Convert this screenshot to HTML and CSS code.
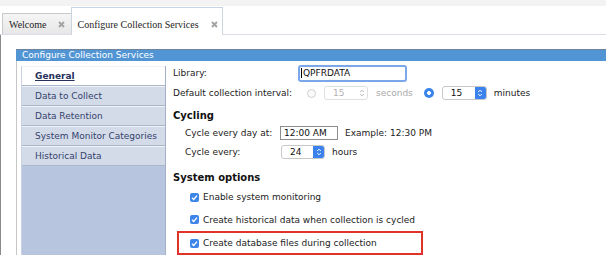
FILE: index.html
```html
<!DOCTYPE html>
<html>
<head>
<meta charset="utf-8">
<link rel="stylesheet" href="styles.css">
</head>
<body>
<div class="tabbar">
  <div class="tab">Welcome<svg class="close" width="7" height="7" viewBox="0 0 7 7"><path d="M1 1L6 6M6 1L1 6"/></svg></div>
  <div class="tab active">Configure Collection Services<svg class="close" width="7" height="7" viewBox="0 0 7 7"><path d="M1 1L6 6M6 1L1 6"/></svg></div>
</div>
<div class="main">
  <div class="panel-head">Configure Collection Services</div>
  <div class="panel-body">
    <nav class="nav">
      <div class="nav-item sel">General</div>
      <div class="nav-item">Data to Collect</div>
      <div class="nav-item">Data Retention</div>
      <div class="nav-item">System Monitor Categories</div>
      <div class="nav-item">Historical Data</div>
    </nav>
    <div class="form">
      <div class="row r-lib">
        <span class="lbl">Library:</span>
        <span class="text focus"><span class="caret"></span>QPFRDATA</span>
      </div>
      <div class="row r-int">
        <span class="lbl">Default collection interval:</span>
        <span class="radio dis"></span>
        <span class="spin dis"><span class="val">15</span><span class="btn"><svg width="6" height="10" viewBox="0 0 6 10"><path d="M1.2 4L3 2.2L4.8 4M1.2 6L3 7.8L4.8 6"/></svg></span></span>
        <span class="unit dis-txt">seconds</span>
        <span class="radio on"></span>
        <span class="spin"><span class="val">15</span><span class="btn"><svg width="6" height="10" viewBox="0 0 6 10"><path d="M1.2 4L3 2.2L4.8 4M1.2 6L3 7.8L4.8 6"/></svg></span></span>
        <span class="unit">minutes</span>
      </div>
      <div class="heading h-cyc">Cycling</div>
      <div class="row r-day ind">
        <span class="lbl2">Cycle every day at:</span>
        <span class="text plain">12:00 AM</span>
        <span class="unit">Example: 12:30 PM</span>
      </div>
      <div class="row r-every ind">
        <span class="lbl2">Cycle every:</span>
        <span class="spin"><span class="val">24</span><span class="btn"><svg width="6" height="10" viewBox="0 0 6 10"><path d="M1.2 4L3 2.2L4.8 4M1.2 6L3 7.8L4.8 6"/></svg></span></span>
        <span class="unit">hours</span>
      </div>
      <div class="heading h-sys">System options</div>
      <div class="row cbrow c1"><span class="cb"><svg width="9" height="9" viewBox="0 0 9 9"><path d="M2 4.7L3.7 6.4L7 2.6"/></svg></span>Enable system monitoring</div>
      <div class="row cbrow c2"><span class="cb"><svg width="9" height="9" viewBox="0 0 9 9"><path d="M2 4.7L3.7 6.4L7 2.6"/></svg></span>Create historical data when collection is cycled</div>
      <div class="row cbrow c3"><span class="cb"><svg width="9" height="9" viewBox="0 0 9 9"><path d="M2 4.7L3.7 6.4L7 2.6"/></svg></span>Create database files during collection</div>
    </div>
  </div>
</div>
</body>
</html>
```
FILE: styles.css
```css
* { box-sizing: border-box; }
body {
  margin: 0;
  width: 606px;
  height: 255px;
  overflow: hidden;
  background: #fff;
  font-family: "DejaVu Sans", Verdana, sans-serif;
  font-size: 9px;
  color: #222;
}
.tabbar {
  display: flex;
  align-items: flex-end;
  height: 35px;
  padding-left: 2px;
  border-bottom: 1px solid #dcdce6;
  background: linear-gradient(#f3f3f3 0 6px, #fff 6px);
}
.tab {
  display: flex;
  align-items: center;
  height: 21px;
  padding: 1px 6px 0 6px;
  border: 1px solid #c9c9c9;
  border-bottom: none;
  background: linear-gradient(#f5f5f5, #e7e7e7);
  font-family: "Liberation Serif", "Times New Roman", serif;
  font-size: 10px;
  color: #1e1e1e;
}
.tab .close { margin-left: 11px; }
.close path { stroke: #a3a3a3; stroke-width: 1.9; fill: none; }
.tab.active {
  height: 28px;
  margin-bottom: -1px;
  margin-left: -1px;
  padding: 5px 4px 0 6px;
  background: #fff;
  border-color: #cfd5de;
  border-top-color: #c6d4e8;
}
.tab.active .close { margin-left: 12px; }
.main {
  height: 220px;
  border-left: 1px solid #8a8a8a;
  padding: 14px 0 0 15px;
}
.panel-head {
  height: 12px;
  border-top: 1px solid #6d849c;
  background: #5195d5;
  color: #fff;
  padding-left: 6px;
  line-height: 11px;
}
.panel-body {
  display: flex;
  height: 200px;
  border-left: 1px solid #c6c6c6;
}
.nav {
  width: 145px;
  margin: 5px 0 0 4px;
  background: #b7c6de;
  border-right: 1px solid #a3b0c5;
  border-left: 1px solid #c9d3e3;
}
.nav-item {
  height: 20px;
  line-height: 18px;
  padding-left: 13px;
  background: #d3dbe9;
  border-top: 1px solid #f0f3f8;
  border-bottom: 1px solid #aab6ca;
  color: #33416b;
}
.nav-item.sel {
  background: #fff;
  font-weight: bold;
  text-decoration: underline;
  color: #27315c;
}
.form { flex: 1; padding-left: 7px; }
.row { display: flex; align-items: center; }
.r-lib { height: 20px; margin-top: 2px; }
.r-int { height: 20px; }
.lbl { width: 125px; }
.ind { padding-left: 12px; }
.lbl2 { width: 95px; }
.text {
  display: flex;
  align-items: center;
  color: #111;
}
.text.focus {
  width: 109px;
  height: 17px;
  border: 2px solid #7aa7ea;
  border-radius: 3px;
  padding-left: 1px;
}
.caret { width: 1px; height: 10px; background: #000; margin-right: 1px; }
.text.plain {
  width: 58px;
  height: 14px;
  border: 1px solid #8d8d8d;
  padding-left: 3px;
}
.radio {
  width: 9px;
  height: 9px;
  border-radius: 50%;
}
.radio.dis {
  margin-left: 9px;
  border: 1px solid #cfcfcf;
  background: #fafafa;
}
.radio.on {
  width: 10px;
  height: 10px;
  margin-left: 11px;
  background: radial-gradient(circle, #fff 0 1.6px, #3c84ea 2.2px);
}
.spin {
  display: flex;
  width: 45px;
  height: 14px;
  margin-left: 8px;
  border: 1px solid #c8c8c8;
  border-radius: 3px;
  overflow: hidden;
  background: #fff;
}
.spin .val { flex: 1; padding-left: 8px; line-height: 12px; color: #111; }
.spin .btn {
  width: 11px;
  display: flex;
  align-items: center;
  justify-content: center;
  background: #3b82ef;
}
.spin .btn path { stroke: #fff; stroke-width: 1; fill: none; }
.spin.dis { width: 44px; border-color: #e0e0e0; }
.spin.dis .val { color: #b3b3b3; }
.spin.dis .btn { background: transparent; }
.spin.dis .btn path { stroke: #b5b5b5; }
.r-every .spin { margin-left: 1px; width: 44px; }
.unit { margin-left: 7px; }
.unit.dis-txt { margin-left: 8px; color: #a9a9a9; }
.heading {
  height: 16px;
  line-height: 16px;
  font-size: 10px;
  font-weight: bold;
  color: #111;
}
.h-cyc { margin-top: 5px; }
.r-day { height: 18px; }
.r-every { height: 20px; }
.h-sys { margin-top: 8px; }
.cbrow { padding-left: 17px; }
.c1 { height: 22px; }
.c2 { height: 23px; }
.c3 {
  height: 24px;
  width: 246px;
  margin-left: 4px;
  padding-left: 11px;
  border: 2px solid #e2332b;
}
.cb {
  display: flex;
  width: 9px;
  height: 9px;
  margin-right: 4px;
  border-radius: 2px;
  background: #3d85e8;
}
.cb path { stroke: #fff; stroke-width: 1.4; fill: none; }
```
